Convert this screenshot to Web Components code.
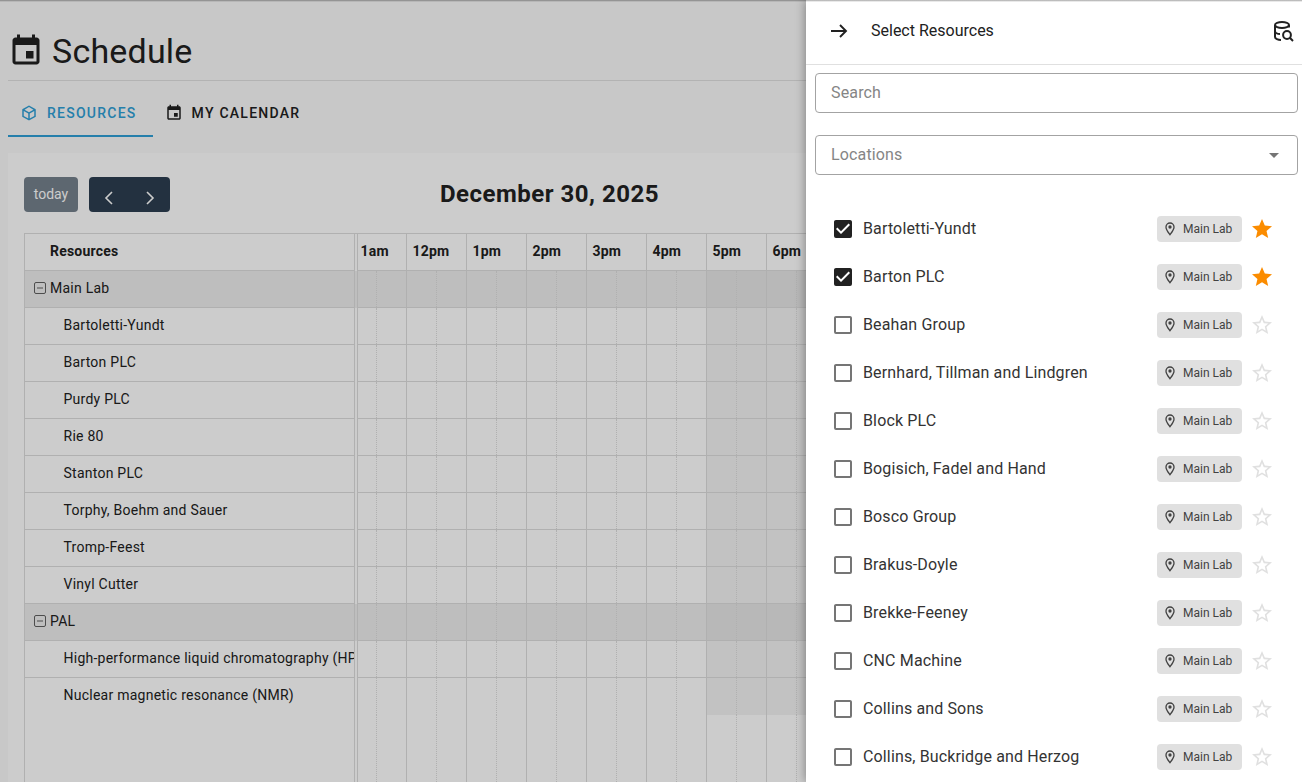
<!DOCTYPE html>
<html>
<head>
<meta charset="utf-8">
<title>Schedule</title>
<style>
  html, body { margin: 0; height: 100%; overflow: hidden; }
  body { font-family: Roboto, "Liberation Sans", sans-serif; background: #fafafa; color: #212121; }
</style>
</head>
<body>
<schedule-page></schedule-page>

<script>
const ICONS = {
  event: "M17 12h-5v5h5v-5zM16 1v2H8V1H6v2H5c-1.11 0-1.99.9-1.99 2L3 19c0 1.1.89 2 2 2h14c1.1 0 2-.9 2-2V5c0-1.1-.9-2-2-2h-1V1h-2zm3 18H5V8h14v11z",
  cube: "M21,16.5C21,16.88 20.79,17.21 20.47,17.38L12.57,21.82C12.41,21.94 12.21,22 12,22C11.79,22 11.59,21.94 11.43,21.82L3.53,17.38C3.21,17.21 3,16.88 3,16.5V7.5C3,7.12 3.21,6.79 3.53,6.62L11.43,2.18C11.59,2.06 11.79,2 12,2C12.21,2 12.41,2.06 12.57,2.18L20.47,6.62C20.79,6.79 21,7.12 21,7.5V16.5M12,4.15L6.04,7.5L12,10.85L17.96,7.5L12,4.15M5,15.91L11,19.29V12.58L5,9.21V15.91M19,15.91V9.21L13,12.58V19.29L19,15.91Z",
  pin: "M12,6.5A2.5,2.5 0 0,1 14.5,9A2.5,2.5 0 0,1 12,11.5A2.5,2.5 0 0,1 9.5,9A2.5,2.5 0 0,1 12,6.5M12,2A7,7 0 0,1 19,9C19,14.25 12,22 12,22C12,22 5,14.25 5,9A7,7 0 0,1 12,2M12,4A5,5 0 0,0 7,9C7,10 7,12 12,18.71C17,12 17,10 17,9A5,5 0 0,0 12,4Z",
  star: "M12,17.27L18.18,21L16.54,13.97L22,9.24L14.81,8.62L12,2L9.19,8.62L2,9.24L7.45,13.97L5.82,21L12,17.27Z",
  starOutline: "M12,15.39L8.24,17.66L9.23,13.38L5.91,10.5L10.29,10.13L12,6.09L13.71,10.13L18.09,10.5L14.77,13.38L15.76,17.66M22,9.24L14.81,8.62L12,2L9.19,8.62L2,9.24L7.45,13.97L5.82,21L12,17.27L18.18,21L16.54,13.97L22,9.24Z",
  checked: "M10,17L5,12L6.41,10.59L10,14.17L17.59,6.58L19,8M19,3H5C3.89,3 3,3.89 3,5V19A2,2 0 0,0 5,21H19A2,2 0 0,0 21,19V5C21,3.89 20.1,3 19,3Z",
  unchecked: "M19,3H5C3.89,3 3,3.89 3,5V19A2,2 0 0,0 5,21H19A2,2 0 0,0 21,19V5C21,3.89 20.1,3 19,3M19,5V19H5V5H19Z"
};

function icon(name, size) {
  return `<svg width="${size}" height="${size}" viewBox="0 0 24 24" fill="currentColor" style="display:block;flex:none"><path d="${ICONS[name]}"/></svg>`;
}

const HOURS = ["1am", "12pm", "1pm", "2pm", "3pm", "4pm", "5pm", "6pm", "7pm", "8pm", "9pm", "10pm", "11pm"];

// one row of the timeline: resource cell on the left, hour slots on the right
class ResourceRow extends HTMLElement {
  constructor() {
    super();
    this.attachShadow({ mode: "open" });
  }

  connectedCallback() {
    const kind = this.getAttribute("kind") || "item";
    const label = this.getAttribute("label") || "";
    const shade = kind === "item" || kind === "group";
    const slots = HOURS.map((hour, i) => {
      const off = shade && i >= 6 ? " off" : "";
      const first = i === 0 ? " first" : "";
      const text = kind === "head" ? `<b>${hour}</b>` : "";
      return `<div class="slot${off}${first}">${text}</div>`;
    }).join("");

    let cell = label;
    if (kind === "head") cell = `<b>${label}</b>`;
    if (kind === "group") {
      cell = `<svg width="14" height="14" viewBox="0 0 14 14" fill="none" stroke="#616161"><rect x="1.5" y="1.5" width="11" height="11" rx="1.5"/><path d="M4 7h6"/></svg><span>${label}</span>`;
    }

    this.shadowRoot.innerHTML = `
      <style>
        :host { display: flex; height: 37px; box-sizing: border-box; background: transparent; }
        :host([kind="group"]) { background: #eeeeee; }
        :host([kind="filler"]) { flex: 1; height: auto; }
        #cell {
          flex: none;
          width: 330px;
          box-sizing: border-box;
          border-right: 1px solid #ddd;
          border-bottom: 1px solid #ddd;
          padding: 0 0 2px 38.5px;
          display: flex;
          align-items: center;
          font-size: 14px;
          letter-spacing: 0.25px;
          white-space: nowrap;
          overflow: hidden;
        }
        :host([kind="head"]) #cell { padding-left: 25px; letter-spacing: 0.2px; }
        :host([kind="group"]) #cell { padding-left: 8px; gap: 3px; }
        :host([kind="filler"]) #cell, :host([last]) #cell { border-bottom: none; }
        :host([last]) #cell { padding-bottom: 3px; }
        #gap { flex: none; width: 2px; border-right: 1px solid #ddd; }
        #lane { flex: none; display: flex; }
        .slot {
          width: 60px;
          flex: none;
          box-sizing: border-box;
          border-right: 1px solid #ddd;
          border-bottom: 1px solid #ddd;
          position: relative;
        }
        .slot.first { width: 49px; }
        .slot.off { background: rgba(215, 215, 215, 0.3); }
        :host([kind="filler"]) .slot, :host([last]) .slot { border-bottom: none; }
        :host([kind="head"]) .slot { display: flex; align-items: center; padding: 0 0 2px 5.5px; font-size: 14px; letter-spacing: 0.2px; }
        :host([kind="head"]) .slot.first { padding-left: 2.5px; }
        :host(:not([kind="head"])) .slot::after {
          content: "";
          position: absolute;
          top: 0;
          bottom: 0;
          left: 29px;
          border-left: 1px dotted #ddd;
        }
        :host(:not([kind="head"])) .slot.first::after { left: 18px; }
      </style>
      <div id="cell">${cell}</div>
      <div id="gap"></div>
      <div id="lane">${slots}</div>
    `;
  }
}
customElements.define("resource-row", ResourceRow);

class CalendarToolbar extends HTMLElement {
  constructor() {
    super();
    this.attachShadow({ mode: "open" });
    this.shadowRoot.innerHTML = `
      <style>
        :host { display: flex; justify-content: space-between; align-items: center; height: 35px; margin-bottom: 21px; }
        #left { display: flex; gap: 11px; width: 146px; }
        #right { width: 349px; }
        button {
          border: none;
          border-radius: 4px;
          background: #2c3e50;
          color: #fff;
          height: 35px;
          padding: 0;
          font: 14px Roboto, "Liberation Sans", sans-serif;
          display: flex;
          align-items: center;
          justify-content: center;
        }
        #today { width: 54px; opacity: 0.65; padding-bottom: 2px; }
        #nav { display: flex; }
        #nav button { width: 40.5px; padding-top: 7px; }
        #nav button:first-child { border-radius: 4px 0 0 4px; }
        #nav button:last-child { border-radius: 0 4px 4px 0; }
        h2 { margin: 0 0 2px; font-size: 24px; font-weight: 700; letter-spacing: 0.5px; color: #212121; }
      </style>
      <div id="left">
        <button id="today">today</button>
        <div id="nav">
          <button><svg width="10" height="14" viewBox="0 0 10 14" fill="none" stroke="#fff" stroke-width="1.6"><path d="M8 1L2 7l6 6"/></svg></button>
          <button><svg width="10" height="14" viewBox="0 0 10 14" fill="none" stroke="#fff" stroke-width="1.6"><path d="M2 1l6 6-6 6"/></svg></button>
        </div>
      </div>
      <h2>December 30, 2025</h2>
      <div id="right"></div>
    `;
  }
}
customElements.define("calendar-toolbar", CalendarToolbar);

class ResourceCalendar extends HTMLElement {
  constructor() {
    super();
    this.attachShadow({ mode: "open" });
    const groups = [
      ["Main Lab", ["Bartoletti-Yundt", "Barton PLC", "Purdy PLC", "Rie 80", "Stanton PLC", "Torphy, Boehm and Sauer", "Tromp-Feest", "Vinyl Cutter"]],
      ["PAL", ["High-performance liquid chromatography (HPLC)", "Nuclear magnetic resonance (NMR)"]]
    ];
    let rows = `<resource-row kind="head" label="Resources"></resource-row>`;
    groups.forEach(([name, items], g) => {
      rows += `<resource-row kind="group" label="${name}"></resource-row>`;
      items.forEach((item, i) => {
        const last = g === groups.length - 1 && i === items.length - 1 ? " last" : "";
        rows += `<resource-row label="${item}"${last}></resource-row>`;
      });
    });
    rows += `<resource-row kind="filler"></resource-row>`;

    this.shadowRoot.innerHTML = `
      <style>
        :host { display: flex; flex-direction: column; flex: 1; min-height: 0; background: #fff; padding: 24px 16px 0; }
        #table {
          flex: 1;
          min-height: 0;
          display: flex;
          flex-direction: column;
          overflow: hidden;
          border-top: 1px solid #ddd;
          border-left: 1px solid #ddd;
        }
      </style>
      <calendar-toolbar></calendar-toolbar>
      <div id="table">${rows}</div>
    `;
  }
}
customElements.define("resource-calendar", ResourceCalendar);

class ScheduleTabs extends HTMLElement {
  constructor() {
    super();
    this.attachShadow({ mode: "open" });
    this.shadowRoot.innerHTML = `
      <style>
        :host { display: flex; height: 56px; margin-bottom: 16px; }
        .tab {
          display: flex;
          align-items: center;
          gap: 9px;
          padding: 10px 16px 0 12px;
          box-sizing: border-box;
          font-size: 14px;
          font-weight: 500;
          letter-spacing: 1.25px;
          border-bottom: 2px solid transparent;
        }
        .tab.active { color: #2f9fd6; border-bottom-color: #2f9fd6; }
      </style>
      <div class="tab active">${icon("cube", 18)}<span>RESOURCES</span></div>
      <div class="tab">${icon("event", 18)}<span>MY CALENDAR</span></div>
    `;
  }
}
customElements.define("schedule-tabs", ScheduleTabs);

class DrawerItem extends HTMLElement {
  constructor() {
    super();
    this.attachShadow({ mode: "open" });
  }

  connectedCallback() {
    const on = this.hasAttribute("selected");
    this.shadowRoot.innerHTML = `
      <style>
        :host { display: flex; align-items: center; height: 48px; flex: none; padding: 0 28px 0 25px; }
        #check { color: ${on ? "#212121" : "#757575"}; margin-right: 8px; }
        #name { flex: 1; font-size: 16px; letter-spacing: 0.14px; color: #333; white-space: nowrap; padding-bottom: 2px; }
        #chip {
          display: flex;
          align-items: center;
          gap: 5px;
          height: 26px;
          width: 85px;
          box-sizing: border-box;
          padding-left: 5px;
          border-radius: 4px;
          background: #e0e0e0;
          color: #424242;
          font-size: 12px;
          margin-right: 8px;
        }
        #star { color: ${on ? "#fb8c00" : "#e0e0e0"}; }
      </style>
      <span id="check">${icon(on ? "checked" : "unchecked", 24)}</span>
      <span id="name"><slot></slot></span>
      <span id="chip">${icon("pin", 16)}Main Lab</span>
      <span id="star">${icon(on ? "star" : "starOutline", 24)}</span>
    `;
  }
}
customElements.define("drawer-item", DrawerItem);

class ResourceDrawer extends HTMLElement {
  constructor() {
    super();
    this.attachShadow({ mode: "open" });
    this.shadowRoot.innerHTML = `
      <style>
        :host {
          position: absolute;
          top: 0;
          right: 0;
          bottom: 0;
          width: 496px;
          background: #fff;
          display: flex;
          flex-direction: column;
          overflow: hidden;
          box-shadow: 0 0 10px rgba(0, 0, 0, 0.4);
        }
        header {
          flex: none;
          height: 65px;
          box-sizing: border-box;
          border-bottom: 1px solid #e0e0e0;
          display: flex;
          align-items: center;
          padding: 0 7px 3px 21px;
          font-size: 16px;
          color: #212121;
        }
        #title { flex: 1; margin-left: 20px; }
        .field {
          flex: none;
          height: 40px;
          box-sizing: border-box;
          margin: 8px 4px 0 9px;
          padding: 0 15px 2px;
          border: 1px solid #a3a3a3;
          border-radius: 4px;
          display: flex;
          align-items: center;
          justify-content: space-between;
          font-size: 16px;
          letter-spacing: 0.15px;
          color: #858585;
        }
        .field + .field { margin-top: 22px; }
        #caret { width: 0; height: 0; border: 5px solid transparent; border-top-color: #757575; border-bottom: none; margin: 2px 3px 0 0; }
        #list { flex: 1; min-height: 0; overflow: hidden; margin-top: 30px; display: flex; flex-direction: column; }
      </style>
      <header>
        <svg width="24" height="24" viewBox="0 0 24 24" fill="none" stroke="#212121" stroke-width="1.9" style="flex:none"><path d="M4 12h15M13 6l6 6-6 6"/></svg>
        <span id="title">Select Resources</span>
        <svg width="24" height="24" viewBox="0 0 24 24" fill="none" stroke="#212121" stroke-width="2" style="flex:none"><ellipse cx="11" cy="6" rx="7" ry="3"/><path d="M4 6v12c0 1.7 3 3 6 3M18 6v2.5M4 12c0 1.7 2.5 3 5 3"/><circle cx="16" cy="16" r="3.9"/><path d="M18.8 18.8l3.2 3.2"/></svg>
      </header>
      <div class="field">Search</div>
      <div class="field">Locations<span id="caret"></span></div>
      <div id="list"><slot></slot></div>
    `;
  }
}
customElements.define("resource-drawer", ResourceDrawer);

class SchedulePage extends HTMLElement {
  constructor() {
    super();
    this.attachShadow({ mode: "open" });
    const names = ["Bartoletti-Yundt", "Barton PLC", "Beahan Group", "Bernhard, Tillman and Lindgren", "Block PLC", "Bogisich, Fadel and Hand", "Bosco Group", "Brakus-Doyle", "Brekke-Feeney", "CNC Machine", "Collins and Sons", "Collins, Buckridge and Herzog"];
    const items = names.map((n, i) => `<drawer-item${i < 2 ? " selected" : ""}>${n}</drawer-item>`).join("");
    this.shadowRoot.innerHTML = `
      <style>
        :host { display: flex; flex-direction: column; height: 782px; box-sizing: border-box; padding: 0 8px; position: relative; overflow: hidden; }
        #head {
          flex: none;
          height: 81px;
          box-sizing: border-box;
          border-bottom: 1px solid #e0e0e0;
          display: flex;
          align-items: center;
          gap: 8px;
          padding-top: 21px;
        }
        h1 { margin: 0; font-size: 34px; font-weight: 400; letter-spacing: 0.2px; line-height: 1; }
        #scrim { position: absolute; inset: 0; background: rgba(0, 0, 0, 0.2); }
        #edge { position: absolute; top: 0; left: 0; right: 0; height: 2px; background: linear-gradient(rgba(0, 0, 0, 0.35), rgba(0, 0, 0, 0)); }
      </style>
      <div id="head">${icon("event", 36)}<h1>Schedule</h1></div>
      <schedule-tabs></schedule-tabs>
      <resource-calendar></resource-calendar>
      <div id="scrim"></div>
      <resource-drawer>${items}</resource-drawer>
      <div id="edge"></div>
    `;
  }
}
customElements.define("schedule-page", SchedulePage);
</script>
</body>
</html>
